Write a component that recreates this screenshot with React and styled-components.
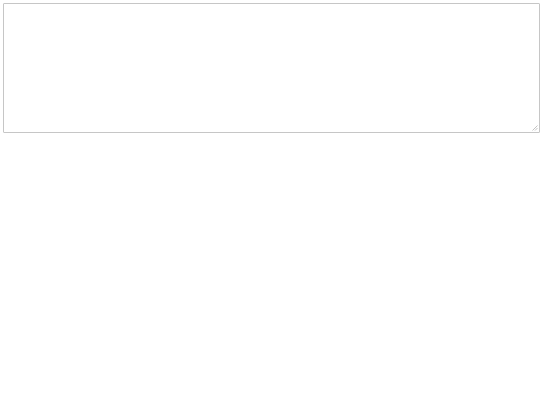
import React from 'react'
import styled, { createGlobalStyle } from 'styled-components'

const GlobalStyle = createGlobalStyle`
  html, body {
    margin: 0;
    background: #fff;
  }
  body {
    font-family: "Liberation Sans", Arial, sans-serif;
  }
`

const Page = styled.div`
  padding: 3px 1px 0 3px;
`

const Field = styled.div`
  position: relative;
  width: 537px;
`

const Editor = styled.textarea`
  display: block;
  box-sizing: border-box;
  width: 537px;
  height: 130px;
  margin: 0;
  padding: 4px;
  border: 1px solid #c6c6c6;
  border-radius: 1px;
  background: #fff;
  font-family: "Liberation Mono", monospace;
  font-size: 13px;
  resize: none;
  outline: none;
`

// faint resize grip, drawn over the corner
const Grip = styled.svg`
  position: absolute;
  right: 2px;
  bottom: 2px;
  width: 6px;
  height: 6px;
  pointer-events: none;
`

function App() {
    return (
        <Page>
            <GlobalStyle />
            <Field>
                <Editor />
                <Grip viewBox="0 0 6 6">
                    <path d="M0.5 5.5 L5.5 0.5 M3 5.5 L5.5 3" stroke="#b4b4b4" strokeWidth="0.8" fill="none" />
                </Grip>
            </Field>
        </Page>
    )
}

export default App
